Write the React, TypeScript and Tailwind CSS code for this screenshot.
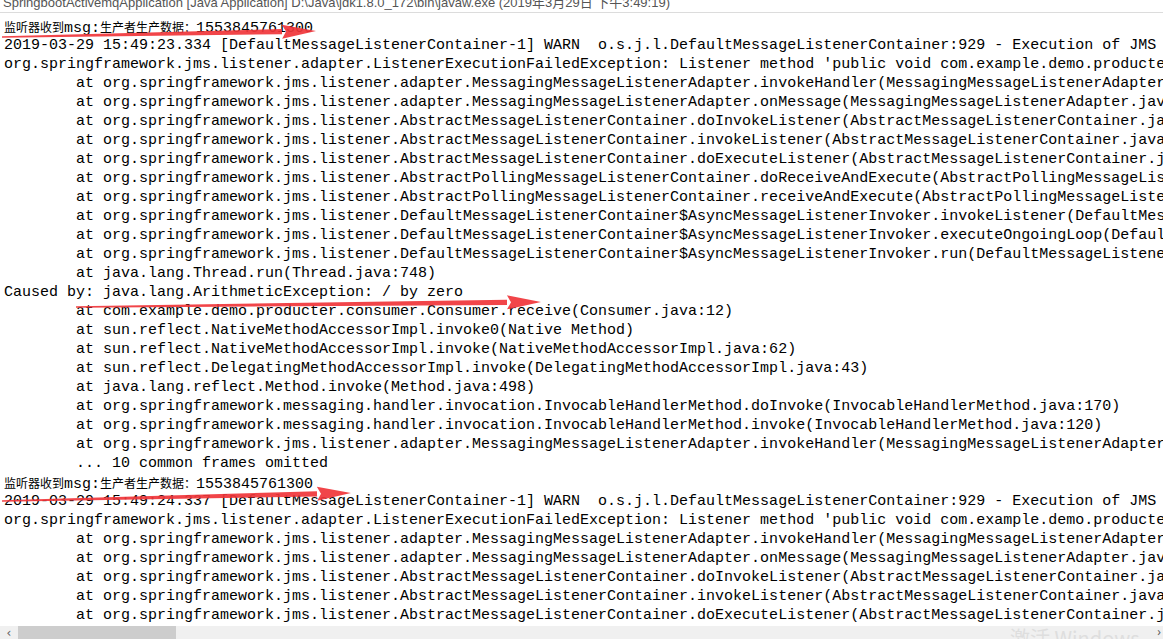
import React from "react";

const TAB = "        ";

const block1 = [
  "2019-03-29 15:49:23.334 [DefaultMessageListenerContainer-1] WARN  o.s.j.l.DefaultMessageListenerContainer:929 - Execution of JMS message listener failed, and no ErrorHandler has been set.",
  "org.springframework.jms.listener.adapter.ListenerExecutionFailedException: Listener method 'public void com.example.demo.producter.consumer.Consumer.receive(java.lang.String)' threw exception",
  TAB + "at org.springframework.jms.listener.adapter.MessagingMessageListenerAdapter.invokeHandler(MessagingMessageListenerAdapter.java:118)",
  TAB + "at org.springframework.jms.listener.adapter.MessagingMessageListenerAdapter.onMessage(MessagingMessageListenerAdapter.java:77)",
  TAB + "at org.springframework.jms.listener.AbstractMessageListenerContainer.doInvokeListener(AbstractMessageListenerContainer.java:736)",
  TAB + "at org.springframework.jms.listener.AbstractMessageListenerContainer.invokeListener(AbstractMessageListenerContainer.java:696)",
  TAB + "at org.springframework.jms.listener.AbstractMessageListenerContainer.doExecuteListener(AbstractMessageListenerContainer.java:674)",
  TAB + "at org.springframework.jms.listener.AbstractPollingMessageListenerContainer.doReceiveAndExecute(AbstractPollingMessageListenerContainer.java:318)",
  TAB + "at org.springframework.jms.listener.AbstractPollingMessageListenerContainer.receiveAndExecute(AbstractPollingMessageListenerContainer.java:256)",
  TAB + "at org.springframework.jms.listener.DefaultMessageListenerContainer$AsyncMessageListenerInvoker.invokeListener(DefaultMessageListenerContainer.java:1189)",
  TAB + "at org.springframework.jms.listener.DefaultMessageListenerContainer$AsyncMessageListenerInvoker.executeOngoingLoop(DefaultMessageListenerContainer.java:1179)",
  TAB + "at org.springframework.jms.listener.DefaultMessageListenerContainer$AsyncMessageListenerInvoker.run(DefaultMessageListenerContainer.java:1076)",
  TAB + "at java.lang.Thread.run(Thread.java:748)",
  "Caused by: java.lang.ArithmeticException: / by zero",
  TAB + "at com.example.demo.producter.consumer.Consumer.receive(Consumer.java:12)",
  TAB + "at sun.reflect.NativeMethodAccessorImpl.invoke0(Native Method)",
  TAB + "at sun.reflect.NativeMethodAccessorImpl.invoke(NativeMethodAccessorImpl.java:62)",
  TAB + "at sun.reflect.DelegatingMethodAccessorImpl.invoke(DelegatingMethodAccessorImpl.java:43)",
  TAB + "at java.lang.reflect.Method.invoke(Method.java:498)",
  TAB + "at org.springframework.messaging.handler.invocation.InvocableHandlerMethod.doInvoke(InvocableHandlerMethod.java:170)",
  TAB + "at org.springframework.messaging.handler.invocation.InvocableHandlerMethod.invoke(InvocableHandlerMethod.java:120)",
  TAB + "at org.springframework.jms.listener.adapter.MessagingMessageListenerAdapter.invokeHandler(MessagingMessageListenerAdapter.java:114)",
  TAB + "... 10 common frames omitted",
];

const block2 = [
  "2019-03-29 15:49:24.337 [DefaultMessageListenerContainer-1] WARN  o.s.j.l.DefaultMessageListenerContainer:929 - Execution of JMS message listener failed, and no ErrorHandler has been set.",
  "org.springframework.jms.listener.adapter.ListenerExecutionFailedException: Listener method 'public void com.example.demo.producter.consumer.Consumer.receive(java.lang.String)' threw exception",
  TAB + "at org.springframework.jms.listener.adapter.MessagingMessageListenerAdapter.invokeHandler(MessagingMessageListenerAdapter.java:118)",
  TAB + "at org.springframework.jms.listener.adapter.MessagingMessageListenerAdapter.onMessage(MessagingMessageListenerAdapter.java:77)",
  TAB + "at org.springframework.jms.listener.AbstractMessageListenerContainer.doInvokeListener(AbstractMessageListenerContainer.java:736)",
  TAB + "at org.springframework.jms.listener.AbstractMessageListenerContainer.invokeListener(AbstractMessageListenerContainer.java:696)",
  TAB + "at org.springframework.jms.listener.AbstractMessageListenerContainer.doExecuteListener(AbstractMessageListenerContainer.java:674)",
];

function MsgLine() {
  return (
    <div className="h-[19px]">
      <span className="text-[12px] font-['Noto_Sans_CJK_SC',sans-serif]">监听器收到</span>
      <span>msg:</span>
      <span className="text-[12px] font-['Noto_Sans_CJK_SC',sans-serif]">生产者生产数据：</span>
      <span>1553845761300</span>
    </div>
  );
}

function Arrow({ x1, y1, x2, y2 }: { x1: number; y1: number; x2: number; y2: number }) {
  const dx = x2 - x1;
  const dy = y2 - y1;
  const len = Math.hypot(dx, dy);
  const ux = dx / len;
  const uy = dy / len;
  const nx = -uy;
  const ny = ux;
  const headLen = 34;
  const bx = x2 - ux * headLen;
  const by = y2 - uy * headLen;
  const shaft = [
    [x1 + nx * 0.7, y1 + ny * 0.7],
    [bx + nx * 2.6, by + ny * 2.6],
    [bx - nx * 2.6, by - ny * 2.6],
    [x1 - nx * 0.7, y1 - ny * 0.7],
  ];
  const head = [
    [bx + nx * 7, by + ny * 7],
    [x2, y2],
    [bx - nx * 7, by - ny * 7],
    [bx + ux * 4, by + uy * 4],
  ];
  const pts = (p: number[][]) => p.map((q) => q.join(",")).join(" ");
  return (
    <g fill="#f0353a" fillOpacity={0.92}>
      <polygon points={pts(shaft)} />
      <polygon points={pts(head)} />
    </g>
  );
}

export default function App() {
  return (
    <div className="relative w-[1163px] h-[639px] overflow-hidden bg-white">
      <div className="h-[13px] overflow-hidden border-b border-[#dcdcdc]">
        <div className="-mt-[5px] pl-[3px] whitespace-pre text-[13px] leading-[16px] text-[#555] font-['Liberation_Sans','Noto_Sans_CJK_SC',sans-serif]">
          SpringbootActivemqApplication [Java Application] D:\Java\jdk1.8.0_172\bin\javaw.exe (2019年3月29日 下午3:49:19)
        </div>
      </div>

      <div className="h-[613px] overflow-hidden pt-[4px] pl-[4px] whitespace-pre text-[15px] leading-[19px] text-black font-['Liberation_Mono',monospace]">
        <MsgLine />
        {block1.map((l, i) => (
          <div key={`a${i}`} className="h-[19px]">{l}</div>
        ))}
        <MsgLine />
        {block2.map((l, i) => (
          <div key={`b${i}`} className="h-[19px]">{l}</div>
        ))}
      </div>

      <div className="relative h-[13px] bg-[#f0f0f0] flex items-start">
        <div className="w-[18px] h-full flex items-center justify-center text-[#606060] text-[12px] leading-none font-['DejaVu_Sans',sans-serif]">‹</div>
        <div className="w-[158px] h-full bg-[#cdcdcd]" />
        <div className="absolute left-[1010px] top-[1px] text-[20px] leading-[22px] text-[#dedede] whitespace-pre font-['Noto_Sans_CJK_SC',sans-serif]">激活 Windows</div>
        <div className="absolute right-[2px] top-[0px] text-[#606060] text-[12px] leading-none">›</div>
      </div>

      <svg className="absolute inset-0 pointer-events-none" width="1163" height="639" viewBox="0 0 1163 639">
        <Arrow x1={2} y1={37} x2={316} y2={31} />
        <Arrow x1={76} y1={307} x2={541} y2={302} />
        <Arrow x1={2} y1={501} x2={351} y2={493} />
      </svg>
    </div>
  );
}
